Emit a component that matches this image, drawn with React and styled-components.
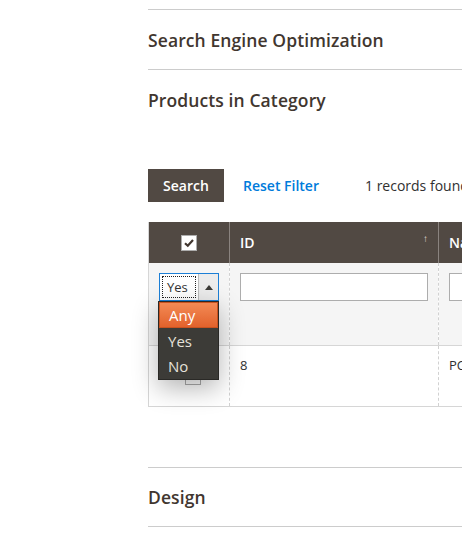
import React from "react";
import styled, { createGlobalStyle } from "styled-components";

const GlobalStyle = createGlobalStyle`
  html, body {
    margin: 0;
    padding: 0;
    background: #fff;
    font-family: "Open Sans", "Liberation Sans", sans-serif;
    color: #303030;
  }
`;

const Viewport = styled.div`
  width: 462px;
  height: 548px;
  overflow: hidden;
  position: relative;
`;

const Content = styled.div`
  margin-left: 148px;
  padding-top: 9px;
  width: 760px;
`;

const Section = styled.div`
  border-top: 1px solid #cccccc;
  ${(p) => p.last && "border-bottom: 1px solid #cccccc;"}
`;

const SectionTitle = styled.div`
  height: ${(p) => p.h || 59}px;
  display: flex;
  align-items: center;
  font-size: 17.5px;
  font-weight: 600;
  color: #41362f;
  letter-spacing: 0.1px;
`;

const SectionBody = styled.div`
  padding-top: 40px;
  padding-bottom: 60px;
`;

const Toolbar = styled.div`
  display: flex;
  align-items: center;
  height: 33px;
  margin-bottom: 20px;
`;

const SearchButton = styled.button`
  width: 76px;
  height: 33px;
  border: none;
  background: #514943;
  color: #fff;
  font-family: inherit;
  font-size: 14px;
  font-weight: 600;
  padding: 0;
`;

const ResetLink = styled.a`
  margin-left: 19px;
  color: #007bdb;
  font-size: 14px;
  font-weight: 600;
`;

const Count = styled.span`
  margin-left: 46px;
  font-size: 14px;
  color: #303030;
`;

const Grid = styled.table`
  border-collapse: collapse;
  table-layout: fixed;
  width: 612px;
  border-left: 1px solid #d6d6d6;
`;

const HeadCell = styled.th`
  width: ${(p) => p.w}px;
  height: 41px;
  background: #514943;
  color: #fff;
  font-size: 14px;
  font-weight: 600;
  text-align: ${(p) => (p.center ? "center" : "left")};
  padding: 0 10px;
  box-sizing: border-box;
  border-right: 1px solid #8a837f;
  position: relative;
`;

const SortArrow = styled.span`
  position: absolute;
  right: 10px;
  top: 9px;
  font-size: 10px;
  font-weight: 400;
  color: #e0dcda;
`;

const FilterRow = styled.tr`
  background: #f5f5f5;
  border-bottom: 1px solid #d6d6d6;
`;

const DataRow = styled.tr`
  background: #fff;
  border-bottom: 1px solid #d6d6d6;
`;

const Cell = styled.td`
  height: ${(p) => p.h}px;
  padding: ${(p) => (p.top ? "10px 10px 0 10px" : "0 10px 0 10px")};
  vertical-align: top;
  border-right: 1px dashed #d1d1d1;
  box-sizing: border-box;
  font-size: 13px;
  color: #303030;
  line-height: 18px;
  position: relative;
`;

const TextInput = styled.div`
  width: 100%;
  height: 28px;
  margin-top: 10px;
  box-sizing: border-box;
  background: #fff;
  border: 1px solid #adadad;
`;

const Select = styled.div`
  width: 60px;
  height: 28px;
  margin-top: 10px;
  box-sizing: border-box;
  border: 1px solid #1c7fd6;
  background: #fff;
  display: flex;
`;

const SelectValue = styled.div`
  flex: 1;
  margin: 2px;
  border: 1px dotted #222;
  font-size: 13px;
  line-height: 20px;
  padding-left: 4px;
  color: #333;
`;

const SelectArrow = styled.div`
  width: 19px;
  background: #ececec;
  border-left: 1px solid #bdbdbd;
  display: flex;
  align-items: center;
  justify-content: center;
`;

const Menu = styled.ul`
  position: absolute;
  left: 9px;
  top: 38px;
  width: 61px;
  margin: 0;
  padding: 0;
  list-style: none;
  box-sizing: border-box;
  background: #3c3b37;
  border: 1px solid #2a2926;
  box-shadow: 0 8px 26px rgba(0, 0, 0, 0.3);
  z-index: 2;
`;

const MenuItem = styled.li`
  height: ${(p) => (p.active ? 24 : 25)}px;
  line-height: ${(p) => (p.active ? 24 : 25)}px;
  padding-left: 9px;
  font-size: 15px;
  color: ${(p) => (p.active ? "#ffffff" : "#e6e2da")};
  background: ${(p) =>
    p.active ? "linear-gradient(#f38a55, #e2622c)" : "transparent"};
  border: ${(p) => (p.active ? "1px solid #c9521f" : "none")};
  margin: ${(p) => (p.active ? "0 0 1px" : "0")};
`;

const CheckBox = styled.span`
  display: inline-block;
  width: 16px;
  height: 16px;
  box-sizing: border-box;
  border: 1px solid #adadad;
  background: #fff;
  vertical-align: middle;
  position: relative;
  top: ${(p) => p.offset || 0}px;
  left: ${(p) => p.shift || 0}px;
`;

const Check = () => (
  <svg width="14" height="14" viewBox="0 0 14 14" style={{ display: "block" }}>
    <path d="M3 7.2 L5.8 9.8 L11 4" fill="none" stroke="#41362f" strokeWidth="2.2" />
  </svg>
);

const App = () => (
  <Viewport>
    <GlobalStyle />
    <Content>
      <Section>
        <SectionTitle>Search Engine Optimization</SectionTitle>
      </Section>
      <Section>
        <SectionTitle>Products in Category</SectionTitle>
        <SectionBody>
          <Toolbar>
            <SearchButton>Search</SearchButton>
            <ResetLink>Reset Filter</ResetLink>
            <Count>1 records found</Count>
          </Toolbar>
          <Grid>
            <thead>
              <tr>
                <HeadCell w={81} center>
                  <CheckBox offset={-1}>
                    <Check />
                  </CheckBox>
                </HeadCell>
                <HeadCell w={209}>
                  ID<SortArrow>↑</SortArrow>
                </HeadCell>
                <HeadCell w={322}>Name</HeadCell>
              </tr>
            </thead>
            <tbody>
              <FilterRow>
                <Cell h={82}>
                  <Select>
                    <SelectValue>Yes</SelectValue>
                    <SelectArrow>
                      <svg width="8" height="5" viewBox="0 0 8 5">
                        <path d="M0 5 L4 0 L8 5 Z" fill="#3c3b37" />
                      </svg>
                    </SelectArrow>
                  </Select>
                  <Menu>
                    <MenuItem active>Any</MenuItem>
                    <MenuItem>Yes</MenuItem>
                    <MenuItem>No</MenuItem>
                  </Menu>
                </Cell>
                <Cell h={82}>
                  <TextInput />
                </Cell>
                <Cell h={82}>
                  <TextInput />
                </Cell>
              </FilterRow>
              <DataRow>
                <Cell h={61} top>
                  <CheckBox offset={11} shift={26} />
                </Cell>
                <Cell h={61} top>8</Cell>
                <Cell h={61} top>PC Gaming</Cell>
              </DataRow>
            </tbody>
          </Grid>
        </SectionBody>
      </Section>
      <Section last>
        <SectionTitle h={58}>Design</SectionTitle>
      </Section>
    </Content>
  </Viewport>
);

export default App;
